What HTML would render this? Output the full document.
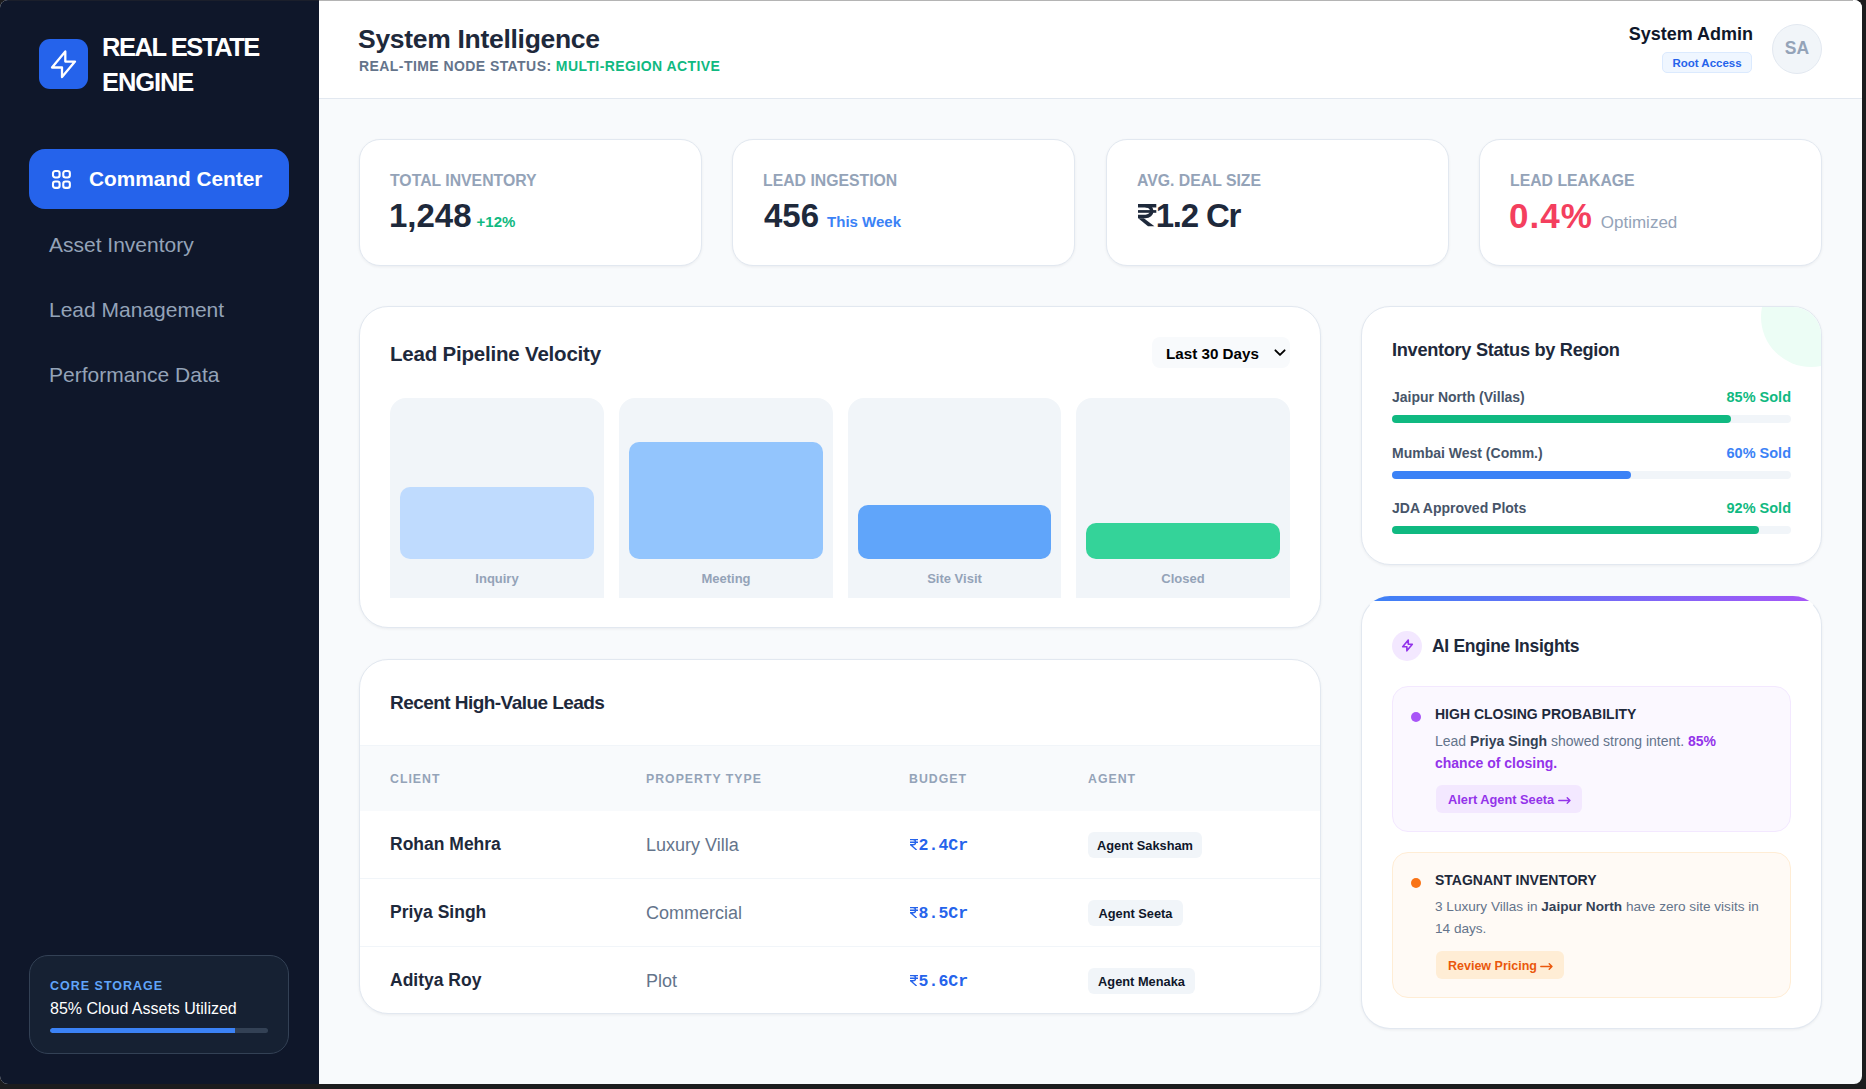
<!DOCTYPE html>
<html><head><meta charset="utf-8">
<style>
*{box-sizing:border-box;margin:0;padding:0}
html,body{width:1866px;height:1089px;overflow:hidden;background:#1c1c1e;font-family:"Liberation Sans",sans-serif}
.win{position:absolute;left:0;top:0;width:1862px;height:1084px;border-radius:8px;overflow:hidden;background:#f8fafc}
.a{position:absolute}
.t{position:absolute;line-height:1;white-space:nowrap}
.b{font-weight:700}
.side{position:absolute;left:0;top:0;width:319px;height:1084px;background:#0f172a}
.hdr{position:absolute;left:319px;top:0;width:1543px;height:99px;background:#fff;border-bottom:1px solid #e2e8f0}
.card{position:absolute;background:#fff;border:1px solid #e2e8f0;box-shadow:0 1px 3px rgba(15,23,42,0.06)}
</style></head><body>
<div class="win">
  <!-- SIDEBAR -->
  <div class="side">
    <div class="a" style="left:39px;top:39px;width:49px;height:50px;border-radius:11px;background:#2563eb"></div>
    <svg class="a" style="left:39px;top:39px" width="50" height="50" viewBox="39 39 50 50" fill="none" stroke="#fff" stroke-width="2.3" stroke-linejoin="round" stroke-linecap="round"><path d="M65.3 51.5V61.55H75L62 77.1V67.5H52z"/></svg>
    <div class="t b" style="left:102px;top:34.5px;font-size:25.5px;letter-spacing:-1.45px;color:#fff">REAL ESTATE</div>
    <div class="t b" style="left:102px;top:69.5px;font-size:25.5px;letter-spacing:-1.1px;color:#fff">ENGINE</div>

    <div class="a" style="left:29px;top:149px;width:260px;height:60px;border-radius:16px;background:#2563eb"></div>
    <svg class="a" style="left:51px;top:169px" width="21" height="21" viewBox="0 0 21 21" fill="none" stroke="#fff" stroke-width="2.1">
      <rect x="2" y="2.05" width="6.6" height="6.4" rx="2.2"/><rect x="12.25" y="2.05" width="6.6" height="6.4" rx="2.2"/>
      <rect x="2" y="12.55" width="6.6" height="6.3" rx="2.2"/><rect x="12.25" y="12.55" width="6.6" height="6.3" rx="2.2"/>
    </svg>
    <div class="t b" style="left:89px;top:169px;font-size:20.8px;color:#fff">Command Center</div>
    <div class="t" style="left:49px;top:234px;font-size:21px;color:#94a3b8">Asset Inventory</div>
    <div class="t" style="left:49px;top:299px;font-size:21px;color:#94a3b8">Lead Management</div>
    <div class="t" style="left:49px;top:364px;font-size:21px;color:#94a3b8">Performance Data</div>

    <div class="a" style="left:29px;top:955px;width:260px;height:99px;border-radius:19px;background:#162133;border:1px solid #334155"></div>
    <div class="t b" style="left:50px;top:980px;font-size:12.5px;letter-spacing:1px;color:#60a5fa">CORE STORAGE</div>
    <div class="t" style="left:50px;top:1001px;font-size:16px;color:#fff">85% Cloud Assets Utilized</div>
    <div class="a" style="left:50px;top:1028px;width:218px;height:5px;border-radius:3px;background:#334155;overflow:hidden"><div style="width:185px;height:5px;background:#3b82f6;border-radius:3px 0 0 3px"></div></div>
  </div>

  <!-- HEADER -->
  <div class="hdr"></div>
  <div class="t b" style="left:358px;top:26px;font-size:26.5px;letter-spacing:-0.3px;color:#1e293b">System Intelligence</div>
  <div class="t b" style="left:359px;top:59px;font-size:14px;letter-spacing:0.43px;color:#64748b">REAL-TIME NODE STATUS: <span style="color:#10b981">MULTI-REGION ACTIVE</span></div>
  <div class="t b" style="right:109px;top:25px;font-size:18px;color:#0f172a">System Admin</div>
  <div class="a" style="left:1662px;top:52px;width:90px;height:21px;border-radius:5px;background:#eff6ff;border:1px solid #dbeafe"></div>
  <div class="t b" style="left:1662px;width:90px;text-align:center;top:58px;font-size:11.5px;color:#2563eb">Root Access</div>
  <div class="a" style="left:1772px;top:24px;width:50px;height:50px;border-radius:50%;background:#f1f5f9;border:1px solid #e2e8f0"></div>
  <div class="t b" style="left:1772px;width:50px;text-align:center;top:40px;font-size:17.5px;color:#94a3b8">SA</div>

  <!-- STAT CARDS -->
  <div class="card" style="left:359px;top:139px;width:343px;height:127px;border-radius:21px"></div>
  <div class="card" style="left:732px;top:139px;width:343px;height:127px;border-radius:21px"></div>
  <div class="card" style="left:1106px;top:139px;width:343px;height:127px;border-radius:21px"></div>
  <div class="card" style="left:1479px;top:139px;width:343px;height:127px;border-radius:21px"></div>

  <div class="t b" style="left:390px;top:173px;font-size:15.8px;color:#94a3b8">TOTAL INVENTORY</div>
  <div class="t b" style="left:389px;top:199px;font-size:33px;color:#1e293b">1,248<span style="margin-left:5px;font-size:15px;color:#10b981">+12%</span></div>
  <div class="t b" style="left:763px;top:173px;font-size:15.8px;color:#94a3b8">LEAD INGESTION</div>
  <div class="t b" style="left:764px;top:199px;font-size:33px;color:#1e293b">456<span style="margin-left:8px;font-size:15px;color:#3b82f6">This Week</span></div>
  <div class="t b" style="left:1137px;top:173px;font-size:15.8px;color:#94a3b8">AVG. DEAL SIZE</div>
  <svg class="a" style="left:1138.4px;top:204.4px" width="18.3" height="22.2" viewBox="0 0 18.3 22.2" fill="#1e293b"><rect x="0" y="0" width="18.3" height="3.5"/><rect x="0" y="6.1" width="18.3" height="2.7"/><path d="M0 12.4H7.5a6.3 5.35 0 0 0 0-10.7" fill="none" stroke="#1e293b" stroke-width="3.5"/><polygon points="0.2,14.2 5.8,14.2 16.4,22.2 10,22.2"/></svg>
  <div class="t b" style="left:1155.7px;top:199px;font-size:33px;letter-spacing:-1.2px;color:#1e293b">1.2 Cr</div>
  <div class="t b" style="left:1510px;top:173px;font-size:15.8px;color:#94a3b8">LEAD LEAKAGE</div>
  <div class="t b" style="left:1509px;top:197.5px;font-size:35px;color:#f43f5e"><span style="letter-spacing:1px">0.4%</span><span style="margin-left:8px;font-size:17px;font-weight:400;color:#94a3b8">Optimized</span></div>

  <!-- PIPELINE -->
  <div class="card" style="left:359px;top:306px;width:962px;height:322px;border-radius:29px"></div>
  <div class="t b" style="left:390px;top:344px;font-size:20.5px;letter-spacing:-0.2px;color:#1e293b">Lead Pipeline Velocity</div>
  <div class="a" style="left:1152px;top:337px;width:138px;height:31px;border-radius:8px;background:#f8fafc"></div>
  <div class="t b" style="left:1166px;top:346px;font-size:15.2px;color:#000">Last 30 Days</div>
  <svg class="a" style="left:1273px;top:346px" width="14" height="12" viewBox="0 0 14 12" fill="none" stroke="#000" stroke-width="1.9" stroke-linecap="round" stroke-linejoin="round"><path d="M2.4 4.3l4.6 4.6 4.6-4.6"/></svg>

  <div class="a" style="left:390px;top:398px;width:214px;height:200px;border-radius:16px 16px 0 0;background:#f1f5f9"></div>
  <div class="a" style="left:619px;top:398px;width:214px;height:200px;border-radius:16px 16px 0 0;background:#f1f5f9"></div>
  <div class="a" style="left:848px;top:398px;width:213px;height:200px;border-radius:16px 16px 0 0;background:#f1f5f9"></div>
  <div class="a" style="left:1076px;top:398px;width:214px;height:200px;border-radius:16px 16px 0 0;background:#f1f5f9"></div>
  <div class="a" style="left:400px;top:487px;width:194px;height:72px;border-radius:10px;background:#bfdbfe"></div>
  <div class="a" style="left:629px;top:442px;width:194px;height:117px;border-radius:10px;background:#93c5fd"></div>
  <div class="a" style="left:858px;top:505px;width:193px;height:54px;border-radius:10px;background:#60a5fa"></div>
  <div class="a" style="left:1086px;top:523px;width:194px;height:36px;border-radius:10px;background:#34d399"></div>
  <div class="t b" style="left:390px;width:214px;text-align:center;top:572px;font-size:13px;color:#94a3b8">Inquiry</div>
  <div class="t b" style="left:619px;width:214px;text-align:center;top:572px;font-size:13px;color:#94a3b8">Meeting</div>
  <div class="t b" style="left:848px;width:213px;text-align:center;top:572px;font-size:13px;color:#94a3b8">Site Visit</div>
  <div class="t b" style="left:1076px;width:214px;text-align:center;top:572px;font-size:13px;color:#94a3b8">Closed</div>

  <!-- TABLE -->
  <div class="card" style="left:359px;top:659px;width:962px;height:355px;border-radius:29px;overflow:hidden">
    <div class="a" style="left:0;top:85px;width:961px;height:66px;background:#f8fafc;border-top:1px solid #f1f5f9"></div>
    <div class="a" style="left:0;top:218px;width:961px;height:1px;background:#f1f5f9"></div>
    <div class="a" style="left:0;top:286px;width:961px;height:1px;background:#f1f5f9"></div>
  </div>
  <div class="t b" style="left:390px;top:693px;font-size:19px;letter-spacing:-0.55px;color:#1e293b">Recent High-Value Leads</div>
  <div class="t b" style="left:390px;top:773px;font-size:12.3px;letter-spacing:1px;color:#94a3b8">CLIENT</div>
  <div class="t b" style="left:646px;top:773px;font-size:12.3px;letter-spacing:1px;color:#94a3b8">PROPERTY TYPE</div>
  <div class="t b" style="left:909px;top:773px;font-size:12.3px;letter-spacing:1px;color:#94a3b8">BUDGET</div>
  <div class="t b" style="left:1088px;top:773px;font-size:12.3px;letter-spacing:1px;color:#94a3b8">AGENT</div>

  <div class="t b" style="left:390px;top:836px;font-size:17.5px;color:#1e293b">Rohan Mehra</div>
  <div class="t" style="left:646px;top:836px;font-size:18px;color:#64748b">Luxury Villa</div>
  <svg class="a" style="left:909.9px;top:838.9px" width="8" height="11" viewBox="0 0 8 11" fill="none" stroke="#2563eb" stroke-width="1.35"><path d="M0 0.65H8M0 3.2H8M0 5.75H3a2.6 2.55 0 0 0 0-5.1M0.6 5.8L6.6 11"/></svg>
  <div class="t b" style="left:918.6px;top:838px;font-family:'Liberation Mono',monospace;font-size:16.5px;color:#2563eb">2.4Cr</div>
  <div class="a" style="left:1088px;top:832px;width:114px;height:26px;border-radius:6px;background:#f1f5f9"></div>
  <div class="t b" style="left:1088px;width:114px;text-align:center;top:840px;font-size:12.8px;color:#0f172a">Agent Saksham</div>

  <div class="t b" style="left:390px;top:904px;font-size:17.5px;color:#1e293b">Priya Singh</div>
  <div class="t" style="left:646px;top:904px;font-size:18px;color:#64748b">Commercial</div>
  <svg class="a" style="left:909.9px;top:906.9px" width="8" height="11" viewBox="0 0 8 11" fill="none" stroke="#2563eb" stroke-width="1.35"><path d="M0 0.65H8M0 3.2H8M0 5.75H3a2.6 2.55 0 0 0 0-5.1M0.6 5.8L6.6 11"/></svg>
  <div class="t b" style="left:918.6px;top:906px;font-family:'Liberation Mono',monospace;font-size:16.5px;color:#2563eb">8.5Cr</div>
  <div class="a" style="left:1088px;top:900px;width:95px;height:26px;border-radius:6px;background:#f1f5f9"></div>
  <div class="t b" style="left:1088px;width:95px;text-align:center;top:908px;font-size:12.8px;color:#0f172a">Agent Seeta</div>

  <div class="t b" style="left:390px;top:972px;font-size:17.5px;color:#1e293b">Aditya Roy</div>
  <div class="t" style="left:646px;top:972px;font-size:18px;color:#64748b">Plot</div>
  <svg class="a" style="left:909.9px;top:974.9px" width="8" height="11" viewBox="0 0 8 11" fill="none" stroke="#2563eb" stroke-width="1.35"><path d="M0 0.65H8M0 3.2H8M0 5.75H3a2.6 2.55 0 0 0 0-5.1M0.6 5.8L6.6 11"/></svg>
  <div class="t b" style="left:918.6px;top:974px;font-family:'Liberation Mono',monospace;font-size:16.5px;color:#2563eb">5.6Cr</div>
  <div class="a" style="left:1088px;top:968px;width:107px;height:26px;border-radius:6px;background:#f1f5f9"></div>
  <div class="t b" style="left:1088px;width:107px;text-align:center;top:976px;font-size:12.8px;color:#0f172a">Agent Menaka</div>

  <!-- INVENTORY -->
  <div class="card" style="left:1361px;top:306px;width:461px;height:259px;border-radius:29px;overflow:hidden">
    <div class="a" style="left:399px;top:-40px;width:100px;height:100px;border-radius:50%;background:#ecfdf5"></div>
  </div>
  <div class="t b" style="left:1392px;top:341px;font-size:18.2px;letter-spacing:-0.3px;color:#1e293b">Inventory Status by Region</div>

  <div class="t b" style="left:1392px;top:390px;font-size:14px;color:#475569">Jaipur North (Villas)</div>
  <div class="t b" style="right:71px;top:390px;font-size:14.5px;color:#10b981">85% Sold</div>
  <div class="a" style="left:1392px;top:415px;width:399px;height:8px;border-radius:4px;background:#f1f5f9"><div style="width:339px;height:8px;border-radius:4px;background:#10b981"></div></div>

  <div class="t b" style="left:1392px;top:446px;font-size:14px;color:#475569">Mumbai West (Comm.)</div>
  <div class="t b" style="right:71px;top:446px;font-size:14.5px;color:#3b82f6">60% Sold</div>
  <div class="a" style="left:1392px;top:471px;width:399px;height:8px;border-radius:4px;background:#f1f5f9"><div style="width:239px;height:8px;border-radius:4px;background:#3b82f6"></div></div>

  <div class="t b" style="left:1392px;top:501px;font-size:14px;color:#475569">JDA Approved Plots</div>
  <div class="t b" style="right:71px;top:501px;font-size:14.5px;color:#10b981">92% Sold</div>
  <div class="a" style="left:1392px;top:526px;width:399px;height:8px;border-radius:4px;background:#f1f5f9"><div style="width:367px;height:8px;border-radius:4px;background:#10b981"></div></div>

  <!-- AI INSIGHTS -->
  <div class="card" style="left:1361px;top:596px;width:461px;height:433px;border-radius:29px;border-top-color:transparent;background:linear-gradient(90deg,#3b82f6,#a855f7) 0 0/100% 5px no-repeat border-box,#fff"></div>
  <div class="a" style="left:1392px;top:631px;width:30px;height:30px;border-radius:50%;background:#f3e8ff"></div>
  <svg class="a" style="left:1392px;top:631px" width="30" height="30" viewBox="1392 631 30 30" fill="none" stroke="#9333ea" stroke-width="1.6" stroke-linejoin="round" stroke-linecap="round"><path d="M1408.26 640.07V644.3H1412.33L1406.87 650.83V646.79H1402.67z"/></svg>
  <div class="t b" style="left:1432px;top:638px;font-size:17.5px;letter-spacing:-0.3px;color:#1e293b">AI Engine Insights</div>

  <div class="a" style="left:1392px;top:686px;width:399px;height:146px;border-radius:16px;background:#fbf8ff;border:1px solid #f3e8ff"></div>
  <div class="a" style="left:1411px;top:712px;width:10px;height:10px;border-radius:50%;background:#a855f7"></div>
  <div class="t b" style="left:1435px;top:707px;font-size:14px;color:#1e293b">HIGH CLOSING PROBABILITY</div>
  <div class="a" style="left:1435px;top:730px;font-size:14px;line-height:22px;color:#64748b;white-space:nowrap">Lead <b style="color:#334155">Priya Singh</b> showed strong intent. <b style="color:#9333ea">85%</b><br><b style="color:#9333ea">chance of closing.</b></div>
  <div class="a" style="left:1436px;top:785px;width:146px;height:28px;border-radius:6px;background:#f3e8ff"></div>
  <div class="t b" style="left:1448px;top:794px;font-size:12.8px;color:#9333ea">Alert Agent Seeta</div>
  <svg class="a" style="left:1557.5px;top:795.8px" width="13" height="9" viewBox="0 0 13 9" fill="none" stroke="#9333ea" stroke-width="1.4" stroke-linecap="round" stroke-linejoin="round"><path d="M0.8 4.5H12M9.2 1.7 12 4.5 9.2 7.3"/></svg>

  <div class="a" style="left:1392px;top:852px;width:399px;height:146px;border-radius:16px;background:#fffaf5;border:1px solid #ffedd5"></div>
  <div class="a" style="left:1411px;top:878px;width:10px;height:10px;border-radius:50%;background:#f97316"></div>
  <div class="t b" style="left:1435px;top:873px;font-size:14px;color:#1e293b">STAGNANT INVENTORY</div>
  <div class="a" style="left:1435px;top:896px;font-size:13.6px;line-height:22px;color:#64748b;white-space:nowrap">3 Luxury Villas in <b style="color:#334155">Jaipur North</b> have zero site visits in<br>14 days.</div>
  <div class="a" style="left:1436px;top:951px;width:128px;height:28px;border-radius:6px;background:#ffedd5"></div>
  <div class="t b" style="left:1448px;top:960px;font-size:12.5px;color:#ea580c">Review Pricing</div>
  <svg class="a" style="left:1540px;top:961.9px" width="13" height="9" viewBox="0 0 13 9" fill="none" stroke="#ea580c" stroke-width="1.4" stroke-linecap="round" stroke-linejoin="round"><path d="M0.8 4.5H12M9.2 1.7 12 4.5 9.2 7.3"/></svg>
</div>
<div class="a" style="left:319px;top:0;width:1534px;height:1px;background:#b4b4b4"></div>
<div class="a" style="left:8px;top:0;width:311px;height:1px;background:#1b1f2b"></div>
</body></html>
